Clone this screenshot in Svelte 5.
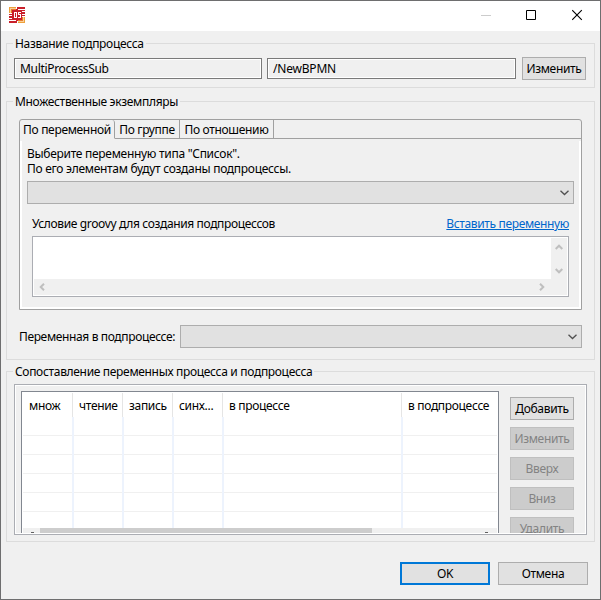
<script>
	const tabs = [
		{ name: 'По переменной', id: 'variable' },
		{ name: 'По группе', id: 'team' },
		{ name: 'По отношению', id: 'relation' }
	];
	const columns = ['множ', 'чтение', 'запись', 'синх...', 'в процессе', 'в подпроцессе'];
	const actions = ['Добавить', 'Изменить', 'Вверх', 'Вниз', 'Удалить'];
	const rows = [1, 2, 3, 4, 5, 6];

	let active = 'variable';
	let selected = false;
</script>

<div class="window">
	<header>
		<svg class="logo" width="16" height="16" viewBox="0 0 16 16" shape-rendering="crispEdges">
			<path fill="#c9202b" d="M3 3h10v10H3zM8 0h8v2H8zM7 2h2v1H7zM10 3h6v1h-6zM13 5h3v2h-3zM13 8h3v1h-3zM0 7h3v1H0zM0 9h3v2H0zM0 12h6v1H0zM0 14h8v2H0zM7 13h2v1H7z" />
			<path fill="#eda13b" d="M0 0h7v1H1v5H0zM15 10h1v6H9v-1h6z" />
			<path fill="#f8d09a" d="M1 1h6v1H2v4H1zM14 10h1v5H9v-1h5z" />
			<path fill="#e8792b" d="M2 2h5v1H3v3H2zM13 10h1v4H9v-1h4z" />
			<path fill="none" stroke="#fff" d="M5.500 5v6M5 5.500h2.500v5H5M12 5.500H9.500v2h2v3H9" />
		</svg>
		<div class="controls">
			<svg width="16" height="16"><path d="M1 8.500h10" stroke="#ccc" /></svg>
			<svg width="16" height="16"><path d="M.5 3.500h9v9h-9z" fill="none" stroke="#000" /></svg>
			<svg width="16" height="16"><path d="M.2 3.200l9.600 9.600M9.800 3.200L.2 12.800" fill="none" stroke="#000" stroke-width="1.1" /></svg>
		</div>
	</header>

	<main>
		<section class="group process">
			<h2>Название подпроцесса</h2>
			<input class="name" readonly value="MultiProcessSub" />
			<input class="path" readonly value="/NewBPMN" />
			<button>Изменить</button>
		</section>

		<section class="group instances">
			<h2>Множественные экземпляры</h2>
			<div class="folder">
				<nav>
					{#each tabs as tab}
						<button class="tab {tab.id}" class:active={active === tab.id} on:click={() => (active = tab.id)}>{tab.name}</button>
					{/each}
					<span class="rest"></span>
				</nav>
				<div class="page">
					<p>Выберите переменную типа "Список".</p>
					<p>По его элементам будут созданы подпроцессы.</p>
					<div class="combo">
						<svg width="9" height="6"><path d="M.5 .7L4.500 4.500 8.500 .7" /></svg>
					</div>
					<div class="condition">
						<span>Условие groovy для создания подпроцессов</span>
						<a href="#insert">Вставить переменную</a>
					</div>
					<div class="editor">
						<div class="text"></div>
						<div class="vscroll">
							<svg width="8" height="6"><path d="M.7 5L4 1.700 7.300 5" /></svg>
							<svg width="8" height="6"><path d="M.7 1L4 4.300 7.300 1" /></svg>
						</div>
						<div class="hscroll">
							<svg width="6" height="8"><path d="M5 .7L1.700 4 5 7.300" /></svg>
							<svg width="6" height="8"><path d="M1 .7L4.300 4 1 7.300" /></svg>
						</div>
					</div>
				</div>
			</div>
			<div class="target">
				<span>Переменная в подпроцессе:</span>
				<div class="combo">
					<svg width="9" height="6"><path d="M.5 .7L4.500 4.500 8.500 .7" /></svg>
				</div>
			</div>
		</section>

		<section class="group mapping">
			<h2>Сопоставление переменных процесса и подпроцесса</h2>
			<div class="pane">
				<div class="table">
					<div class="row head">
						{#each columns as column}
							<div class="cell"><span>{column}</span></div>
						{/each}
					</div>
					{#each rows as row}
						<div class="row">
							{#each columns as column}
								<div class="cell"></div>
							{/each}
						</div>
					{/each}
					<div class="bar"><i></i><b></b><i></i></div>
				</div>
				<div class="actions">
					{#each actions as action, i}
						<button disabled={i > 0 && !selected}>{action}</button>
					{/each}
				</div>
			</div>
		</section>
	</main>

	<footer>
		<button class="primary">OK</button>
		<button>Отмена</button>
	</footer>
</div>

<style>
	:global(body) {
		overflow: hidden;
	}

	.window, .window * {
		box-sizing: border-box;
	}

	.window {
		width: 601px;
		height: 600px;
		border: 1px solid #6e6e6f;
		background: #f0f0f0;
		color: #000;
		font: 12px/15px 'Noto Sans', 'Open Sans', sans-serif;
		letter-spacing: -0.32px;
		white-space: nowrap;
	}

	header {
		display: flex;
		justify-content: space-between;
		height: 30px;
		padding: 6px 8px;
		background: #fff;
	}

	.controls {
		display: flex;
		gap: 30px;
		padding-right: 4px;
	}

	svg {
		display: block;
		flex: none;
	}

	main {
		padding: 12px 5px 0;
	}

	.group {
		position: relative;
		border: 1px solid #dcdcdc;
	}

	h2 {
		position: absolute;
		left: 6px;
		top: -8px;
		margin: 0;
		padding: 0 2px;
		background: #f0f0f0;
		font: inherit;
	}

	button {
		width: 64px;
		height: 23px;
		padding: 0;
		border: 1px solid #adadad;
		background: #e1e1e1;
		color: #000;
		font: inherit;
		letter-spacing: inherit;
		line-height: 20px;
	}

	button:disabled {
		border-color: #bfbfbf;
		background: #ccc;
		color: #838383;
	}

	.process {
		display: flex;
		height: 45px;
		padding: 13px 0 0 7px;
	}

	input {
		height: 21px;
		margin: 1px 0 0;
		padding: 0 5px;
		border: 1px solid #7a7a7a;
		outline: 1px solid #fff;
		outline-offset: -2px;
		background: #f0f0f0;
		color: #000;
		font: inherit;
		letter-spacing: inherit;
	}

	.name {
		width: 248px;
		margin-right: 5px;
	}

	.path {
		width: 249px;
		margin-right: 6px;
		letter-spacing: -0.2px;
	}

	.instances {
		height: 259px;
		margin-top: 13px;
		padding: 17px 12px 0;
	}

	.folder {
		height: 191px;
		border: 1px solid #a0a0a0;
		border-radius: 3px 3px 0 0;
	}

	nav {
		display: flex;
		height: 19px;
	}

	.tab {
		height: 19px;
		border: solid #a0a0a0;
		border-width: 0 1px 1px 0;
		background: none;
		line-height: 20px;
	}

	.active {
		border-bottom-color: #f0f0f0;
		border-radius: 0 3px 0 0;
	}

	.variable {
		width: 95px;
	}

	.team {
		width: 65px;
	}

	.relation {
		width: 94px;
	}

	.rest {
		flex: 1;
		border-bottom: 1px solid #a0a0a0;
	}

	.page {
		height: 168px;
		margin-top: 2px;
		padding: 5px 5px 0;
		border: solid #fff;
		border-width: 0 2px 2px;
	}

	p {
		margin: 0;
		letter-spacing: -0.29px;
	}

	.combo {
		display: flex;
		align-items: center;
		justify-content: flex-end;
		height: 23px;
		padding-right: 4px;
		border: 1px solid #adadad;
		background: #e1e1e1;
	}

	.combo path {
		fill: none;
		stroke: #505050;
		stroke-width: 1.3;
	}

	p + .combo {
		margin-top: 5px;
	}

	.condition {
		display: flex;
		justify-content: space-between;
		margin: 12px 5px 5px;
		letter-spacing: -0.36px;
	}

	.condition a {
		color: #0066cc;
	}

	.editor {
		display: grid;
		grid-template: 41px 16px / 1fr 16px;
		height: 61px;
		margin: 0 5px;
		padding: 1px;
		border: 1px solid #abadb3;
		background: #fff;
	}

	.editor path {
		fill: none;
		stroke: #bfbfbf;
		stroke-width: 2;
	}

	.vscroll {
		display: flex;
		flex-direction: column;
		justify-content: space-between;
		align-items: center;
		padding: 6px 0 5px;
		background: #f0f0f0;
	}

	.hscroll {
		display: flex;
		grid-column: 1 / 3;
		justify-content: space-between;
		align-items: center;
		padding: 0 22px 0 5px;
		background: #f0f0f0;
	}

	.target {
		display: flex;
		align-items: center;
		margin-top: 15px;
		letter-spacing: -0.36px;
	}

	.target .combo {
		width: 402px;
		margin-left: auto;
	}

	.mapping {
		height: 171px;
		margin-top: 11px;
		padding: 12px 7px 0;
	}

	.pane {
		display: flex;
		height: 151px;
		padding: 5px;
		padding-bottom: 0;
		border: 1px solid #abadb3;
		outline: 1px solid #fff;
		outline-offset: -2px;
		overflow: hidden;
	}

	.table {
		display: flex;
		flex-direction: column;
		width: 478px;
		height: 143px;
		margin: 1px 0 0 1px;
		padding: 1px 1px 0;
		border: 1px solid #828790;
		border-bottom: 0;
		background: #fff;
	}

	.row {
		display: grid;
		flex: none;
		grid-template-columns: 51px 50px 50px 50px 179px 1fr;
		height: 19px;
		border-bottom: 1px solid #f0f0f0;
	}

	.row:nth-child(7) {
		height: 15px;
		border: 0;
	}

	.cell {
		margin-bottom: -1px;
		border-right: 2px solid #edf3fd;
	}

	.head {
		height: 24px;
		border: 0;
	}

	.head .cell {
		margin: 0 1px 0 0;
		padding: 5px 0 0 6px;
		border-right: 1px solid #e5e5e5;
	}

	.head .cell + .cell {
		padding-left: 5px;
	}

	.row .cell:last-child {
		border: 0;
	}

	.bar {
		display: flex;
		height: 5px;
		margin-top: 1px;
		background: #f0f0f0;
	}

	.bar i {
		width: 3px;
		height: 1px;
		margin: 4px 6px 0 8px;
		background: #606060;
	}

	.bar b {
		width: 332px;
		margin-right: 105px;
		background: #cdcdcd;
	}

	.actions {
		display: flex;
		flex-direction: column;
		gap: 7px;
		padding: 7px 0 0 11px;
	}

	.actions button {
		flex: none;
	}

	footer {
		display: flex;
		justify-content: flex-end;
		gap: 8px;
		padding: 20px 12px 0;
	}

	footer button {
		width: 90px;
	}

	.primary {
		border: 2px solid #0078d7;
		line-height: 18px;
	}
</style>
